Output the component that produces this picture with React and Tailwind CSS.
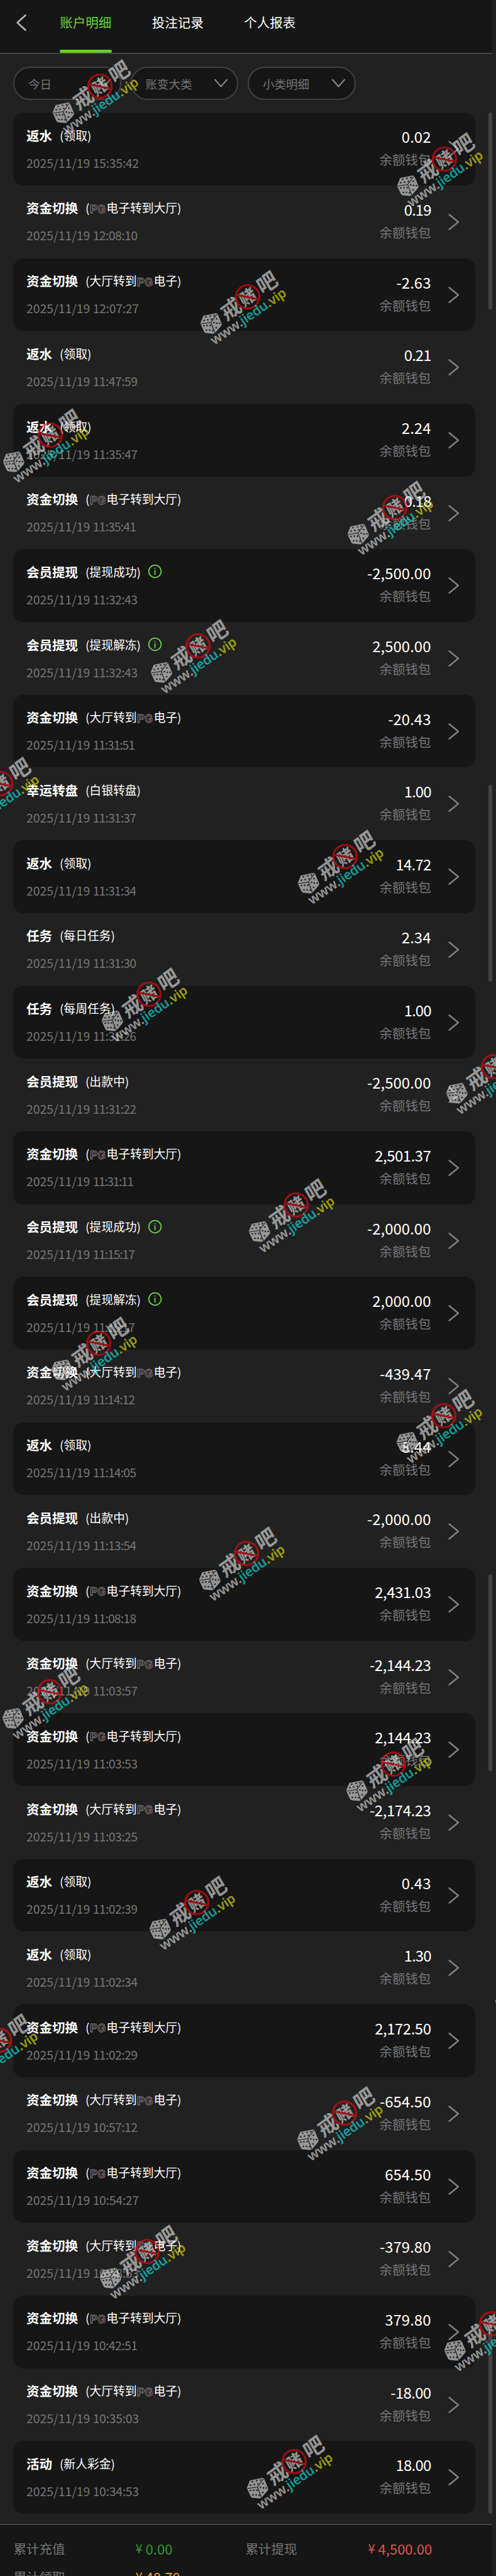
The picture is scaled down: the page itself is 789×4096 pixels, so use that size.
const tabs = ['账户明细', '投注记录', '个人报表'];
const filters = ['今日', '账变大类', '小类明细'];

const PG_IN = '(PG电子转到大厅)';
const PG_OUT = '(大厅转到PG电子)';

const records = [
    { title: '返水', note: '(领取)', time: '15:35:42', amount: '0.02' },
    { title: '资金切换', note: PG_IN, time: '12:08:10', amount: '0.19' },
    { title: '资金切换', note: PG_OUT, time: '12:07:27', amount: '-2.63' },
    { title: '返水', note: '(领取)', time: '11:47:59', amount: '0.21' },
    { title: '返水', note: '(领取)', time: '11:35:47', amount: '2.24' },
    { title: '资金切换', note: PG_IN, time: '11:35:41', amount: '0.18' },
    { title: '会员提现', note: '(提现成功)', time: '11:32:43', amount: '-2,500.00', info: true },
    { title: '会员提现', note: '(提现解冻)', time: '11:32:43', amount: '2,500.00', info: true },
    { title: '资金切换', note: PG_OUT, time: '11:31:51', amount: '-20.43' },
    { title: '幸运转盘', note: '(白银转盘)', time: '11:31:37', amount: '1.00' },
    { title: '返水', note: '(领取)', time: '11:31:34', amount: '14.72' },
    { title: '任务', note: '(每日任务)', time: '11:31:30', amount: '2.34' },
    { title: '任务', note: '(每周任务)', time: '11:31:26', amount: '1.00' },
    { title: '会员提现', note: '(出款中)', time: '11:31:22', amount: '-2,500.00' },
    { title: '资金切换', note: PG_IN, time: '11:31:11', amount: '2,501.37' },
    { title: '会员提现', note: '(提现成功)', time: '11:15:17', amount: '-2,000.00', info: true },
    { title: '会员提现', note: '(提现解冻)', time: '11:15:17', amount: '2,000.00', info: true },
    { title: '资金切换', note: PG_OUT, time: '11:14:12', amount: '-439.47' },
    { title: '返水', note: '(领取)', time: '11:14:05', amount: '8.44' },
    { title: '会员提现', note: '(出款中)', time: '11:13:54', amount: '-2,000.00' },
    { title: '资金切换', note: PG_IN, time: '11:08:18', amount: '2,431.03' },
    { title: '资金切换', note: PG_OUT, time: '11:03:57', amount: '-2,144.23' },
    { title: '资金切换', note: PG_IN, time: '11:03:53', amount: '2,144.23' },
    { title: '资金切换', note: PG_OUT, time: '11:03:25', amount: '-2,174.23' },
    { title: '返水', note: '(领取)', time: '11:02:39', amount: '0.43' },
    { title: '返水', note: '(领取)', time: '11:02:34', amount: '1.30' },
    { title: '资金切换', note: PG_IN, time: '11:02:29', amount: '2,172.50' },
    { title: '资金切换', note: PG_OUT, time: '10:57:12', amount: '-654.50' },
    { title: '资金切换', note: PG_IN, time: '10:54:27', amount: '654.50' },
    { title: '资金切换', note: PG_OUT, time: '10:48:53', amount: '-379.80' },
    { title: '资金切换', note: PG_IN, time: '10:42:51', amount: '379.80' },
    { title: '资金切换', note: PG_OUT, time: '10:35:03', amount: '-18.00' },
    { title: '活动', note: '(新人彩金)', time: '10:34:53', amount: '18.00' },
];

// centre of the red ring of every stamp
const stamps = [
    [159, 137], [707, 253], [394, 472], [80, 692], [628, 807], [315, 1027],
    [864, 1143], [1, 1246], [549, 1362], [237, 1581], [785, 1696], [471, 1916],
    [157, 2136], [706, 2251], [392, 2470], [78.5, 2690], [626, 2805], [313, 3025],
    [863, 3140], [-1, 3244], [547.5, 3360], [234, 3580], [782, 3695], [468, 3914],
];

const thumbs = [179, 1248, 2503, 3684];

// the digit 1 is set narrower than the others
const tighten = (text, perOne) => {
    const ones = text.split('1').length - 1;
    return { letterSpacing: `${(-ones * perOne) / text.length}px` };
};

export default function App() {
    return (
        <div className="relative flex h-[4096px] w-[789px] flex-col overflow-hidden bg-[#212121] font-['Noto_Sans_CJK_SC',sans-serif] text-white">
            <header className="flex h-[85.5px] w-[783px] shrink-0 items-stretch border-b-2 border-[#424242] bg-[#161616]">
                <button type="button" className="flex w-[95px] pl-[25px] pt-[22px]">
                    <svg width="20" height="28" viewBox="0 0 20 28" fill="none" stroke="#b5b5b5" strokeWidth="2.6" strokeLinecap="round" strokeLinejoin="round">
                        <path d="M15.5 2.2 L2.6 14 L15.5 25.8" />
                    </svg>
                </button>
                <nav className="flex gap-[64px]">
                    {tabs.map((tab, i) => (
                        <div
                            key={tab}
                            className={`flex w-[82.5px] flex-col items-center justify-between whitespace-nowrap pt-[20px] text-[20.5px] leading-[30px] ${i === 0 ? 'text-[#69d13c]' : 'text-white'}`}
                        >
                            <span>{tab}</span>
                            {i === 0 && <div className="h-[5px] w-full rounded-full bg-[#63cf30]" />}
                        </div>
                    ))}
                </nav>
            </header>

            <div className="flex shrink-0 gap-[15px] pl-[21px] pt-[20.5px]">
                {filters.map((name) => (
                    <div key={name} className="flex h-[53px] w-[171.5px] items-center justify-between rounded-full border-2 border-[#404040] bg-[#161616] pl-[22px] pr-[14px]">
                        <span className="text-[18.5px] leading-[28px] text-[#757575]">{name}</span>
                        <svg width="23" height="15" viewBox="0 0 23 15" fill="none" stroke="#8c8c8c" strokeWidth="2.1" strokeLinecap="round" strokeLinejoin="round">
                            <path d="M2 1.6 L11.5 12.6 L21 1.6" />
                        </svg>
                    </div>
                ))}
            </div>

            <div className="mt-[20.3px] flex h-[3817.8px] shrink-0 flex-col pl-[21px]">
                {records.map((record, i) => (
                    <RecordRow key={i} record={record} dark={i % 2 === 0} />
                ))}
            </div>

            <footer className="mt-[15.5px] w-[783px] flex-1 overflow-hidden border-t-2 border-[#424242] bg-[#161616] pl-[21.5px] pt-[22px]">
                <div className="grid auto-rows-[30px] grid-cols-[194px_175px_195px_1fr] gap-y-[15px] text-[20.5px] leading-[30px] whitespace-nowrap text-[#757575]">
                    <span>累计充值</span>
                    <Money className="text-[#2c9c2c]" value="0.00" />
                    <span>累计提现</span>
                    <Money className="text-[#e2534d]" value="4,500.00" />
                    <span>累计领取</span>
                    <Money className="text-[#f5a42c]" value="48.70" />
                </div>
            </footer>

            {thumbs.map((top) => (
                <div key={top} className="absolute left-[776.5px] h-[313px] w-[6px] rounded-full bg-[#424242]" style={{ top }} />
            ))}

            {stamps.map(([x, y]) => (
                <Stamp key={`${x}-${y}`} x={x} y={y} />
            ))}
        </div>
    );
}

function RecordRow({ record, dark }) {
    const { title, note, time, amount, info } = record;
    const [before, after] = note.split('PG');

    return (
        <div className={`flex h-[115.69px] w-[734.5px] shrink-0 items-start rounded-[16px] pl-[21px] ${dark ? 'bg-[#161616]' : ''}`}>
            <div className="flex flex-1 flex-col pt-[20.5px]">
                <div className="flex h-[30px] items-center whitespace-nowrap">
                    <span className="text-[20.5px] leading-[30px] font-bold">{title}</span>
                    <span className="ml-[12px] flex items-center text-[18.8px] leading-[30px]">
                        {before}
                        {after && <PgLogo />}
                        {after}
                    </span>
                    {info && (
                        <svg className="ml-[11px]" width="23" height="23" viewBox="0 0 23 23" fill="none" stroke="#6ecf4a" strokeWidth="1.8" strokeLinecap="round">
                            <circle cx="11.5" cy="11.5" r="9.8" />
                            <path d="M11.5 10.2 V16.4 M11.5 6.7 V6.9" />
                        </svg>
                    )}
                </div>
                <div className="mt-[14px] h-[30px] text-[19.4px] leading-[30px] whitespace-pre text-[#757575]">
                    2025/11/19 <span style={tighten(time, 2.3)}>{time}</span>
                </div>
            </div>
            <div className="flex flex-col items-end pt-[20px]">
                <span className="text-[24px] leading-[36px]" style={tighten(amount, 4)}>{amount}</span>
                <span className="text-[20.5px] leading-[36px] text-[#757575]">余额钱包</span>
            </div>
            <svg className="ml-[26px] mr-[24px] mt-[44px]" width="20" height="28" viewBox="0 0 20 28" fill="none" stroke="#808080" strokeWidth="2.4" strokeLinecap="round" strokeLinejoin="round">
                <path d="M2.6 2.2 L17 14 L2.6 25.8" />
            </svg>
        </div>
    );
}

function Money({ value, className }) {
    return (
        <span className={`flex h-[30px] items-center ${className}`}>
            <span className="mr-[5px] text-[20px] leading-[30px]">¥</span>
            <span className="text-[22px] leading-[30px]">{value}</span>
        </span>
    );
}

function PgLogo() {
    return (
        <svg width="27" height="20" viewBox="0 0 27 20" className="relative top-[1.5px]">
            <g fontFamily="Liberation Sans" fontSize="18" fontWeight="bold" fill="#0c0a0c" strokeWidth="1">
                <text x="1" y="16.5" stroke="#8b8996" textLength="12" lengthAdjust="spacingAndGlyphs">P</text>
                <text x="13.5" y="16.5" stroke="#9c8680" textLength="12.5" lengthAdjust="spacingAndGlyphs">G</text>
            </g>
        </svg>
    );
}

function Stamp({ x, y }) {
    return (
        <svg
            className="pointer-events-none absolute opacity-60"
            style={{ left: x - 100, top: y - 100 }}
            width="200"
            height="200"
            viewBox="-100 -100 200 200"
        >
            <Dice />
            <g transform="rotate(-36) skewX(-6)" fontFamily="Noto Sans CJK SC" fontWeight="700" fontSize="33" fill="#e6e6e6" textAnchor="middle">
                <text x="-33" y="12">戒</text>
                <text x="0" y="10" fontSize="27">赌</text>
                <text x="38" y="12">吧</text>
            </g>
            <circle r="18.5" fill="none" stroke="#f5080f" strokeWidth="3.2" />
            <path d="M-18 -3 L18 4" stroke="#f5080f" strokeWidth="3.2" />
            <text transform="translate(-53 77) rotate(-34.5)" fontFamily="Noto Sans" fontSize="21" fontWeight="600" textLength="141" fill="#e6e6e6">
                www.<tspan fill="#10f0ec">jiedu</tspan><tspan fill="#eef010">.vip</tspan>
            </text>
        </svg>
    );
}

function Dice() {
    return (
        <g transform="translate(-58.5 43)">
            <path d="M-12 -13 L8 -17 Q10 -17 11 -15 L17 -1 Q17.5 1 16.5 3 L7 14 Q5 16 2 15.5 L-8 14.5 Q-10 14 -11 12 L-16.5 0 Q-17 -1.5 -16 -3 Z" fill="#e6e6e6" />
            <path d="M-16 0 L0 -2.5 L9.5 -15.5 M0 -2.5 L6.5 14.5" fill="none" stroke="#222" strokeWidth="1.2" />
            <g fill="#222">
                <circle cx="-8" cy="-11" r="1.3" />
                <circle cx="-1" cy="-12.5" r="1.3" />
                <circle cx="5" cy="-13.5" r="1.3" />
                <circle cx="-11" cy="-5.5" r="1.3" />
                <circle cx="-5" cy="-6.5" r="1.3" />
                <circle cx="1" cy="-7.5" r="1.3" />
                <circle cx="-11" cy="3" r="1.3" />
                <circle cx="-6" cy="2.5" r="1.3" />
                <circle cx="-1" cy="2.5" r="1.3" />
                <circle cx="-7" cy="10" r="1.3" />
                <circle cx="-2" cy="10" r="1.3" />
                <circle cx="3" cy="10.5" r="1.3" />
                <circle cx="9" cy="-8" r="1.3" />
                <circle cx="5" cy="-2" r="1.3" />
                <circle cx="9.5" cy="-1" r="1.3" />
                <circle cx="14" cy="-1" r="1.3" />
                <circle cx="8.5" cy="6" r="1.3" />
            </g>
        </g>
    );
}
